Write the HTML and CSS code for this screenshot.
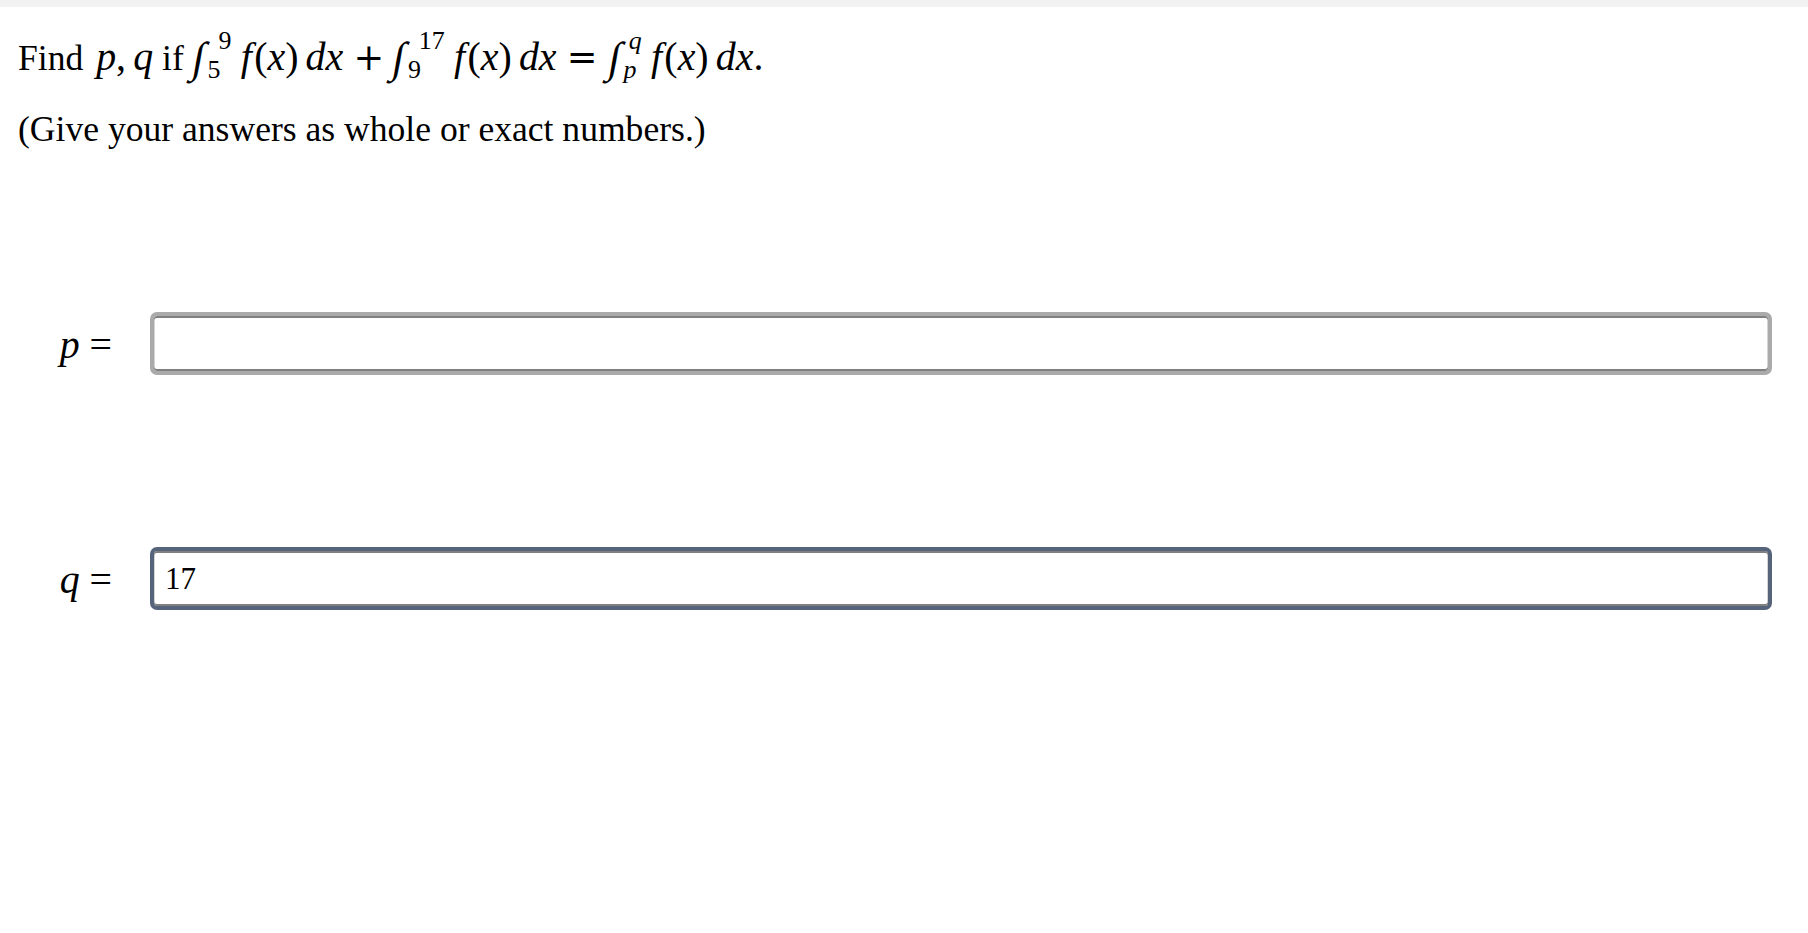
FILE: index.html
```html
<!DOCTYPE html>
<html lang="en">
<head>
<meta charset="utf-8">
<title>Integral question</title>
<link rel="stylesheet" href="styles.css">
</head>
<body>
<div class="topbar"></div>
<main class="content">
  <p class="line line-1">Find <span class="m m-vars"><i>p</i>,<span class="sp-thin"></span><i>q</i></span> if <span class="m"><span class="sign">∫</span><span class="lim"><span class="up">9</span><span class="lo">5</span></span><i class="fn">f</i>(<i>x</i>)<span class="sp-thin"></span><i>d</i><i>x</i><span class="op">+</span><span class="sign">∫</span><span class="lim"><span class="up">17</span><span class="lo">9</span></span><i class="fn">f</i>(<i>x</i>)<span class="sp-thin"></span><i>d</i><i>x</i><span class="op op-rel">=</span><span class="sign">∫</span><span class="lim lim-var"><span class="up"><i>q</i></span><span class="lo"><i>p</i></span></span><i class="fn">f</i>(<i>x</i>)<span class="sp-thin"></span><i>d</i><i>x</i>.</span></p>
  <p class="line line-2">(Give your answers as whole or exact numbers.)</p>
  <div class="answers">
    <div class="row row-p">
      <label class="lbl" for="ans-p"><span class="m"><i>p</i><span class="rel">=</span></span></label>
      <input class="box" id="ans-p" type="text" value="">
    </div>
    <div class="row row-q">
      <label class="lbl" for="ans-q"><span class="m"><i>q</i><span class="rel">=</span></span></label>
      <input class="box box-focus" id="ans-q" type="text" value="17">
    </div>
  </div>
</main>
</body>
</html>
```
FILE: styles.css
```css
html, body {
  margin: 0;
  padding: 0;
  background: #ffffff;
}
body {
  font-family: "Liberation Serif", "Times New Roman", serif;
  color: #000000;
  width: 1808px;
  height: 933px;
  overflow: hidden;
}
.topbar {
  height: 7px;
  background: #f2f2f2;
}
.content {
  padding: 29px 36px 0 18px;
}
.line {
  margin: 0;
  font-size: 35.6px;
  line-height: 41px;
  height: 41px;
  white-space: nowrap;
}
.line-2 {
  margin-top: 32px;
}
.m {
  font-size: 1.12em;
}
.m i {
  font-style: italic;
}
.m-vars {
  margin-left: 0.1em;
}
.sp-thin {
  display: inline-block;
  width: 0.18em;
}
.fn {
  display: inline-block;
  padding-left: 0.22em;
  margin-right: 0.06em;
}
.op {
  display: inline-block;
  font-family: "DejaVu Serif", "Liberation Serif", serif;
  font-size: 0.92em;
  margin: 0 0.24em 0 0.28em;
}
.op-rel {
  margin: 0 0.3em 0 0.28em;
}
.rel {
  display: inline-block;
  padding-left: 0.25em;
}
.sign {
  display: inline-block;
  font-size: 1.08em;
  transform: skewX(-10deg);
  vertical-align: -0.04em;
}
.lim {
  display: inline-block;
  font-size: 0.65em;
  line-height: 29px;
  vertical-align: -8px;
  margin-top: -32px;
  margin-left: 0.12em;
  margin-right: 0.02em;
}
.lim > span {
  display: block;
}
.up {
  padding-left: 0.42em;
}
.lim-var .up {
  padding-left: 0.2em;
}
.answers {
  margin-top: 162px;
}
.row {
  display: flex;
  align-items: center;
}
.row-q {
  margin-top: 172px;
}
.lbl {
  width: 94px;
  flex: none;
  text-align: right;
  font-size: 35.6px;
  line-height: 41px;
  padding-top: 4px;
  margin-right: 38px;
}
.box {
  flex: 1;
  height: 63px;
  box-sizing: border-box;
  margin: 0;
  border: 4px solid #aaaaaa;
  border-radius: 7px;
  padding: 0 11px;
  background: #ffffff;
  font-family: "Liberation Serif", "Times New Roman", serif;
  font-size: 31px;
  color: #000000;
  outline: none;
  box-shadow: inset 0 2px 0 #808080, inset 0 -2px 0 #808080, inset 1px 0 0 #d4d4d4, inset -1px 0 0 #d4d4d4;
}
.box-focus {
  border-color: #56647b;
}
```
